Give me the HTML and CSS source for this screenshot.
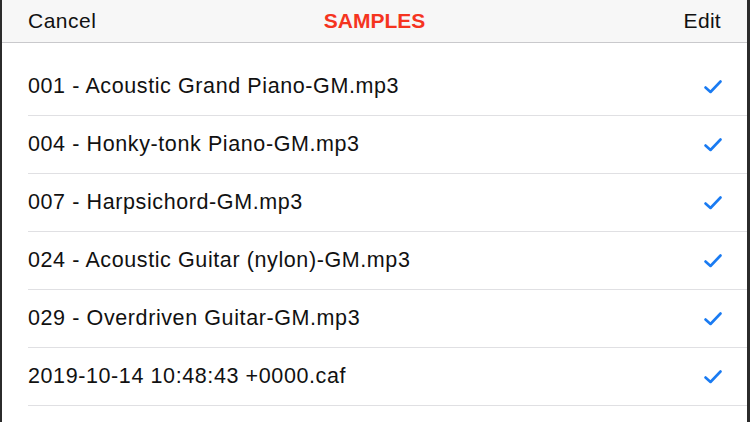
FILE: index.html
```html
<!DOCTYPE html>
<html>
<head>
<meta charset="utf-8">
<link rel="stylesheet" href="styles.css">
</head>
<body>
<div class="frame">
  <header class="nav">
    <span class="nav-btn nav-left">Cancel</span>
    <span class="nav-title">SAMPLES</span>
    <span class="nav-btn nav-right">Edit</span>
  </header>
  <ul class="list">
    <li class="row"><span class="label">001 - Acoustic Grand Piano-GM.mp3</span><svg class="check" viewBox="0 0 18 14"><path d="M1.5 7.5 L6.5 12 L16.5 1.5"/></svg></li>
    <li class="row"><span class="label">004 - Honky-tonk Piano-GM.mp3</span><svg class="check" viewBox="0 0 18 14"><path d="M1.5 7.5 L6.5 12 L16.5 1.5"/></svg></li>
    <li class="row"><span class="label">007 - Harpsichord-GM.mp3</span><svg class="check" viewBox="0 0 18 14"><path d="M1.5 7.5 L6.5 12 L16.5 1.5"/></svg></li>
    <li class="row"><span class="label">024 - Acoustic Guitar (nylon)-GM.mp3</span><svg class="check" viewBox="0 0 18 14"><path d="M1.5 7.5 L6.5 12 L16.5 1.5"/></svg></li>
    <li class="row"><span class="label">029 - Overdriven Guitar-GM.mp3</span><svg class="check" viewBox="0 0 18 14"><path d="M1.5 7.5 L6.5 12 L16.5 1.5"/></svg></li>
    <li class="row"><span class="label">2019-10-14 10:48:43 +0000.caf</span><svg class="check" viewBox="0 0 18 14"><path d="M1.5 7.5 L6.5 12 L16.5 1.5"/></svg></li>
  </ul>
</div>
</body>
</html>
```
FILE: styles.css
```css
html, body {
  margin: 0;
  padding: 0;
  background: #ffffff;
}
.frame {
  width: 750px;
  height: 422px;
  box-sizing: border-box;
  border-left: 2px solid #2b2b2b;
  border-right: 3px solid #2b2b2b;
  overflow: hidden;
  font-family: "Liberation Sans", Arial, sans-serif;
  color: #111111;
  background: #ffffff;
}
.nav {
  height: 43px;
  box-sizing: border-box;
  background: #f7f7f7;
  border-bottom: 1px solid #c9c9cc;
  display: grid;
  grid-template-columns: 1fr auto 1fr;
  align-items: center;
  padding: 0 26px 0 26px;
}
.nav-btn {
  font-size: 21px;
  letter-spacing: 0.5px;
  color: #111111;
}
.nav-left {
  justify-self: start;
}
.nav-right {
  justify-self: end;
  letter-spacing: 0.3px;
}
.nav-title {
  font-size: 21px;
  font-weight: bold;
  color: #f5341f;
}
.list {
  list-style: none;
  margin: 0;
  padding: 15px 0 0 26px;
}
.row {
  height: 58px;
  box-sizing: border-box;
  border-bottom: 1px solid #e0e0e3;
  display: flex;
  align-items: center;
  justify-content: space-between;
  padding-right: 25px;
}
.label {
  font-size: 21.5px;
  letter-spacing: 0.6px;
  color: #111111;
}
.check {
  width: 18px;
  height: 14px;
  fill: none;
  stroke: #1a7bf2;
  stroke-width: 2.6;
  stroke-linecap: round;
  stroke-linejoin: round;
}
```
